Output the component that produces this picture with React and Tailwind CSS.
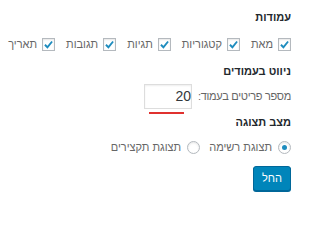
import React from 'react';

function Check({ label }) {
  return (
    <label className="flex items-center gap-[5px] ml-[11px]">
      <span className="w-[13px] h-[13px] border border-[#b4b9be] bg-white shadow-[inset_0_1px_2px_rgba(0,0,0,0.1)] flex items-center justify-center">
        <svg width="11" height="11" viewBox="0 0 20 20">
          <path d="M3.5 10.5 L8 15 L16.5 4.5" fill="none" stroke="#1e8cbe" strokeWidth="3.4" />
        </svg>
      </span>
      <span>{label}</span>
    </label>
  );
}

function Radio({ label, checked }) {
  return (
    <label className="flex items-center gap-[6px] ml-[9px]">
      <span className="w-[13px] h-[13px] rounded-full border border-[#b4b9be] bg-white shadow-[inset_0_1px_2px_rgba(0,0,0,0.1)] flex items-center justify-center">
        {checked && <span className="w-[5px] h-[5px] rounded-full bg-[#1e8cbe]" />}
      </span>
      <span>{label}</span>
    </label>
  );
}

export default function App() {
  const columns = ['מאת', 'קטגוריות', 'תגיות', 'תגובות', 'תאריך'];
  return (
    <div dir="rtl" className="w-[300px] h-[201px] bg-white pr-[9px] pt-[10px] font-['Liberation_Sans',Arial,sans-serif] text-[11px] text-[#666] overflow-hidden">
      <div className="font-bold text-[#23282d] leading-[14px]">עמודות</div>
      <div className="flex items-center mt-[13px] h-[14px]">
        {columns.map((c) => (
          <Check key={c} label={c} />
        ))}
      </div>

      <div className="font-bold text-[#23282d] leading-[14px] mt-[13px]">ניווט בעמודים</div>
      <div className="flex items-center mt-[6px]">
        <span className="tracking-[-0.3px]">מספר פריטים בעמוד:</span>
        <div className="relative mr-[6px]">
          <div className="w-[48px] h-[25px] border border-[#ddd] shadow-[inset_0_1px_2px_rgba(0,0,0,0.07)] text-[14px] text-[#32373c] flex items-center justify-end pl-[6px]" dir="ltr">
            20
          </div>
          <span className="absolute left-[5px] top-[28px] w-[35px] h-[2px] bg-[#e0312f]" />
        </div>
      </div>

      <div className="font-bold text-[#23282d] leading-[14px] mt-[6px]">מצב תצוגה</div>
      <div className="flex items-center mt-[11px] h-[14px]">
        <Radio label="תצוגת רשימה" checked />
        <Radio label="תצוגת תקצירים" />
      </div>

      <button className="mt-[12px] h-[25px] px-[8px] rounded-[3px] bg-[#0085ba] border border-[#006799] text-white text-[11px] shadow-[0_1px_0_#006799]">
        החל
      </button>
    </div>
  );
}
